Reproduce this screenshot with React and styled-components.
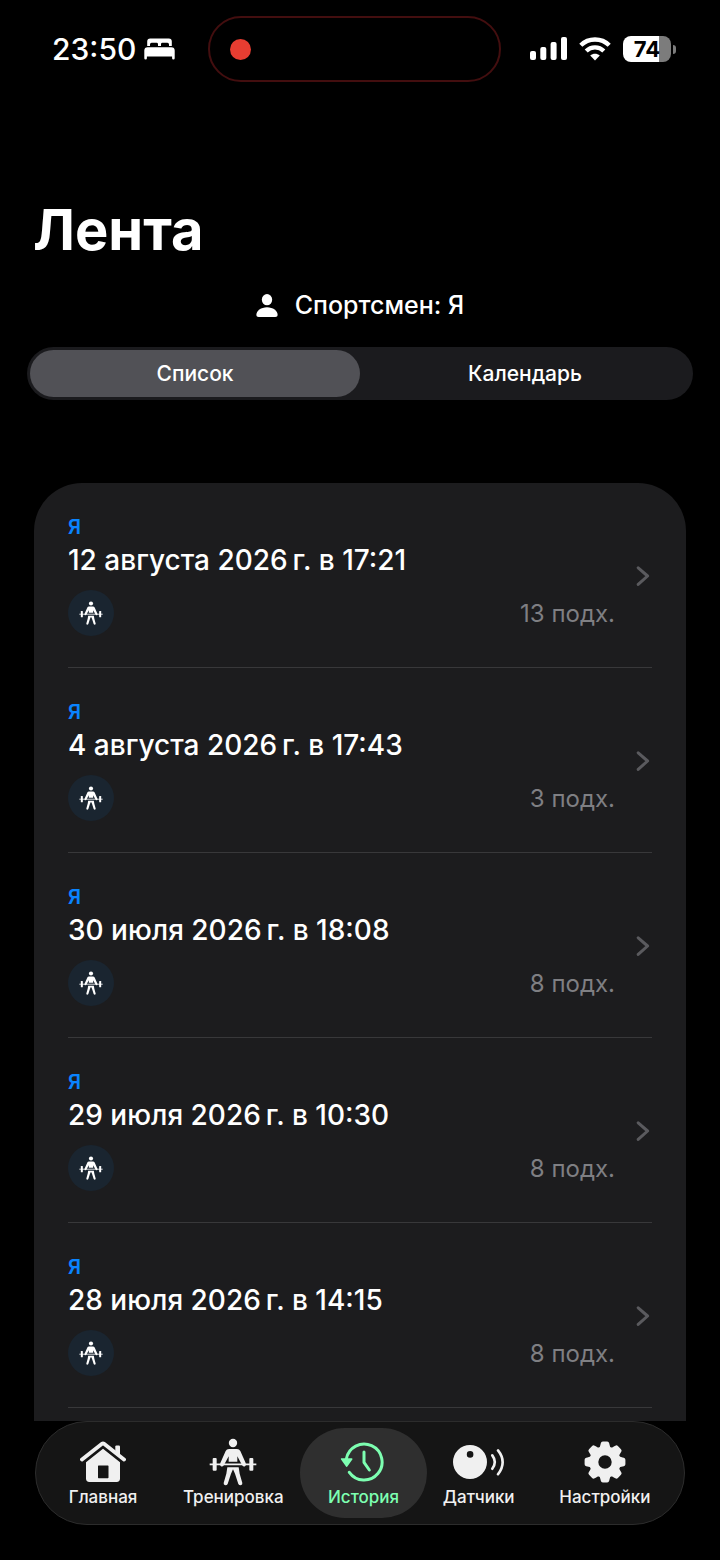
import React from 'react'
import styled, { createGlobalStyle, css } from 'styled-components'

const workouts = [
  { id: 1, athlete: 'Я', date: '12 августа 2026\u202fг. в 17:21', count: '13 подх.' },
  { id: 2, athlete: 'Я', date: '4 августа 2026\u202fг. в 17:43', count: '3 подх.' },
  { id: 3, athlete: 'Я', date: '30 июля 2026\u202fг. в 18:08', count: '8 подх.' },
  { id: 4, athlete: 'Я', date: '29 июля 2026\u202fг. в 10:30', count: '8 подх.' },
  { id: 5, athlete: 'Я', date: '28 июля 2026\u202fг. в 14:15', count: '8 подх.' },
]

const tabs = [
  { label: 'Главная', grow: 63, icon: HomeIcon },
  { label: 'Тренировка', grow: 67, icon: LifterIcon },
  { label: 'История', grow: 63, icon: HistoryIcon, active: true },
  { label: 'Датчики', grow: 52, icon: SensorIcon },
  { label: 'Настройки', grow: 74, icon: GearIcon },
]

function BedIcon() {
  return (
    <svg width="31" height="22" viewBox="0 0 31 22" fill="currentColor" aria-hidden="true">
      <path d="M3.2 8V3.4Q3.2 0.5 6.2 0.5H24.8Q27.8 0.5 27.8 3.4V8H25V6.4Q25 4.8 23.4 4.8H18.4Q17 4.8 17 6.2V8H14V6.2Q14 4.8 12.6 4.8H7.6Q6 4.8 6 6.4V8Z" />
      <path d="M0.3 12.6Q0.3 9.2 3.7 9.2H27.3Q30.7 9.2 30.7 12.6V20.2Q30.7 21.4 29.4 21.4Q28.1 21.4 28.1 20.2V18.5H2.9V20.2Q2.9 21.4 1.6 21.4Q0.3 21.4 0.3 20.2Z" />
    </svg>
  )
}

function SignalIcon() {
  return (
    <svg width="37" height="24" viewBox="0 0 37 24" fill="currentColor" aria-hidden="true">
      <rect x="0" y="14" width="6" height="9" rx="2" />
      <rect x="10.3" y="10" width="6" height="13" rx="2" />
      <rect x="20.6" y="5" width="6" height="18" rx="2" />
      <rect x="31" y="0" width="6" height="23" rx="2" />
    </svg>
  )
}

function WifiIcon() {
  return (
    <svg width="32" height="24" viewBox="0 0 32 24" fill="none" stroke="currentColor" aria-hidden="true">
      <path d="M1.8 8.3C9.5 0.6 22.5 0.6 30.2 8.3" strokeWidth="4.4" />
      <path d="M7.2 14C12 9.1 20 9.1 24.8 14" strokeWidth="4.2" />
      <path d="M16 23.4L11.2 18.6C14 16 18 16 20.8 18.6Z" fill="currentColor" stroke="none" />
    </svg>
  )
}

function PersonIcon() {
  return (
    <svg width="22" height="23" viewBox="0 0 66 69" fill="currentColor" aria-hidden="true">
      <ellipse cx="33" cy="17" rx="15.5" ry="17" />
      <path d="M1 63C1 51 15 40 33 40S65 51 65 63Q65 69 58 69H8Q1 69 1 63Z" />
    </svg>
  )
}

function ChevronIcon() {
  return (
    <svg width="14" height="20" viewBox="0 0 14 20" fill="none" stroke="currentColor" strokeWidth="3" strokeLinecap="round" strokeLinejoin="round" aria-hidden="true">
      <path d="M2.2 1.8L11.6 10L2.2 18.4" />
    </svg>
  )
}

function HomeIcon() {
  return (
    <svg width="46" height="42" viewBox="0 0 46 42" fill="currentColor" aria-hidden="true">
      <path d="M2 18.6L22 2.8Q23 2 24 2.8L44 18.6" fill="none" stroke="currentColor" strokeWidth="3.8" strokeLinecap="round" strokeLinejoin="round" />
      <path d="M35.3 12V5.6Q35.3 4.4 36.5 4.4H38.8Q40 4.4 40 5.6V15Z" />
      <path fillRule="evenodd" d="M23 7.8L40 21.3V37.6Q40 41 36.6 41H9.4Q6 41 6 37.6V21.3ZM18.6 24.4Q18 24.4 18 25V36.6Q18 37.2 18.6 37.2H27.9Q28.5 37.2 28.5 36.6V25Q28.5 24.4 27.9 24.4Z" />
    </svg>
  )
}

function LifterIcon({ size = 48 }) {
  return (
    <svg width={size} height={size} viewBox="26 21 144 144" fill="currentColor" aria-hidden="true">
      <circle cx="98" cy="36" r="12.5" />
      <path d="M86 54H110Q117 54 120 60L136 96Q139 103 134 106Q129 108 125 102L111 76V92H85V76L71 102Q67 108 62 106Q57 103 60 96L76 60Q79 54 86 54Z" />
      <path d="M28 97.5H168V102.5H28Z" />
      <rect x="37" y="81" width="12" height="38" rx="3" />
      <rect x="147" y="81" width="12" height="38" rx="3" />
      <path d="M81 109H115L118 128L126 156Q127 162 121 163Q116 163 114 159L104 128L98 115L92 128L82 159Q80 163 75 163Q69 162 70 156L78 128Z" />
    </svg>
  )
}

function HistoryIcon() {
  return (
    <svg width="48" height="42" viewBox="268 136 144 126" fill="none" stroke="currentColor" strokeWidth="9" strokeLinecap="round" strokeLinejoin="round" aria-hidden="true">
      <path d="M287 190A54 54 0 1 1 296 230" />
      <path d="M340 169V200L356 223" />
      <path d="M273 190H303L288 211Z" fill="currentColor" strokeWidth="5" />
    </svg>
  )
}

function SensorIcon() {
  return (
    <svg width="52" height="40" viewBox="0 0 52 40" aria-hidden="true">
      <path fill="currentColor" fillRule="evenodd" d="M0 20A17 17 0 1 1 34 20A17 17 0 1 1 0 20ZM13.8 12.4A3.3 3.3 0 1 0 20.4 12.4A3.3 3.3 0 1 0 13.8 12.4Z" />
      <path d="M39.3 13.4Q44.3 20 39.3 26.8M45 8.4Q54.3 20 45 32.2" fill="none" stroke="currentColor" strokeWidth="2.6" strokeLinecap="round" />
    </svg>
  )
}

function GearIcon() {
  const teeth = [0, 45, 90, 135, 180, 225, 270, 315]
  return (
    <svg width="42" height="42" viewBox="-21 -21 42 42" fill="currentColor" aria-hidden="true">
      <circle r="11.2" fill="none" stroke="currentColor" strokeWidth="9" />
      {teeth.map((angle) => (
        <path key={angle} transform={`rotate(${angle})`} d="M-6.2 -13.5Q-4.9 -15 -4.5 -17.6L-4.2 -18.8Q-3.8 -20.4 -2.2 -20.4H2.2Q3.8 -20.4 4.2 -18.8L4.5 -17.6Q4.9 -15 6.2 -13.5Z" />
      ))}
    </svg>
  )
}

function App() {
  return (
    <>
      <GlobalStyle />
      <Screen>
        <StatusBar>
          <Clock>
            23:50
            <BedIcon />
          </Clock>
          <Island>
            <RecordDot />
          </Island>
          <Indicators>
            <SignalIcon />
            <WifiIcon />
            <Battery>
              <BatteryLevel>74</BatteryLevel>
              <BatteryCap />
            </Battery>
          </Indicators>
        </StatusBar>

        <Title>Лента</Title>

        <AthleteButton type="button">
          <PersonIcon />
          Спортсмен: Я
        </AthleteButton>

        <Segments role="tablist">
          <Segment type="button" role="tab" aria-selected="true" $active>
            Список
          </Segment>
          <Segment type="button" role="tab" aria-selected="false">
            Календарь
          </Segment>
        </Segments>

        <Feed>
          <Card>
            {workouts.map((item) => (
              <li key={item.id}>
                <Row href={`#workout-${item.id}`}>
                  <RowBody>
                    <Athlete>{item.athlete}</Athlete>
                    <RowDate>{item.date}</RowDate>
                    <Meta>
                      <Badge>
                        <LifterIcon size={24} />
                      </Badge>
                      <Count>{item.count}</Count>
                    </Meta>
                  </RowBody>
                  <ChevronIcon />
                </Row>
              </li>
            ))}
          </Card>
        </Feed>

        <TabBar>
          {tabs.map(({ label, grow, icon: Icon, active }) => (
            <Tab key={label} href={`#${label}`} $grow={grow} $active={active} aria-current={active ? 'page' : undefined}>
              <TabIcon>
                <Icon />
              </TabIcon>
              {label}
            </Tab>
          ))}
        </TabBar>
      </Screen>
    </>
  )
}

const GlobalStyle = createGlobalStyle`
  * {
    box-sizing: border-box;
  }

  body {
    margin: 0;
    background: #000;
    color: #fff;
    font-family: Inter, 'Liberation Sans', sans-serif;
  }

  button {
    font-family: inherit;
    color: inherit;
    border: 0;
    background: none;
    padding: 0;
    cursor: pointer;
  }

  a {
    color: inherit;
    text-decoration: none;
  }

  svg {
    flex-shrink: 0;
    display: block;
  }
`

const Screen = styled.div`
  height: 100vh;
  display: flex;
  flex-direction: column;
`

const StatusBar = styled.header`
  display: grid;
  grid-template-columns: 1fr minmax(0, 293px) 1fr;
  align-items: center;
  padding: 16px 44px 0 32px;
`

const Clock = styled.div`
  display: flex;
  align-items: center;
  gap: 8px;
  padding-left: 20px;
  font-size: 30px;
  font-weight: 500;
`

const Island = styled.div`
  height: 66px;
  display: flex;
  align-items: center;
  padding-left: 20px;
  border: 2px solid #430e0f;
  border-radius: 33px;
`

const RecordDot = styled.span`
  width: 21px;
  height: 21px;
  border-radius: 50%;
  background: #e73d31;
`

const Indicators = styled.div`
  display: flex;
  align-items: center;
  justify-content: flex-end;
  gap: 12px;
`

const Battery = styled.div`
  display: flex;
  align-items: center;
  gap: 2px;
`

const BatteryLevel = styled.span`
  width: 48px;
  height: 26px;
  border-radius: 8px;
  background: linear-gradient(to right, #fff 74%, #7c7c7c 74%);
  color: #000;
  font-size: 22px;
  font-weight: 700;
  line-height: 26px;
  text-align: center;
`

const BatteryCap = styled.span`
  width: 3px;
  height: 9px;
  border-radius: 0 3px 3px 0;
  background: #7c7c7c;
`

const Title = styled.h1`
  margin: 112px 33px 0;
  font-size: 56px;
  font-weight: 700;
  line-height: 72px;
`

const AthleteButton = styled.button`
  align-self: center;
  display: flex;
  align-items: center;
  gap: 17px;
  margin-top: 23px;
  font-size: 25px;
  font-weight: 500;
  line-height: 32px;
`

const Segments = styled.div`
  display: flex;
  margin: 26px 27px 0;
  padding: 3px;
  border-radius: 27px;
  background: #1b1b1e;
`

const Segment = styled.button`
  flex: 1;
  height: 47px;
  border-radius: 24px;
  font-size: 21px;
  font-weight: 500;

  ${({ $active }) =>
    $active &&
    css`
      background: #515156;
    `}
`

const Feed = styled.main`
  flex: 1;
  min-height: 0;
  display: flex;
  flex-direction: column;
  margin-top: 83px;
  padding: 0 34px;
  overflow-y: auto;
  scrollbar-width: none;
`

const Card = styled.ul`
  flex: 1 0 auto;
  margin: 0;
  padding: 0 34px;
  list-style: none;
  border-radius: 48px 48px 0 0;
  background: #1c1c1e;
`

const Row = styled.a`
  display: flex;
  align-items: center;
  gap: 21px;
  padding: 33px 2px 31px 0;
  border-bottom: 1px solid #38383a;
  color: #5a5a5e;
`

const RowBody = styled.div`
  flex: 1;
  min-width: 0;
`

const Athlete = styled.div`
  font-size: 20px;
  font-weight: 600;
  line-height: 22px;
  color: #0a84ff;
`

const RowDate = styled.div`
  margin-top: 4px;
  font-size: 28px;
  font-weight: 500;
  line-height: 36px;
  color: #fff;
`

const Meta = styled.div`
  display: flex;
  align-items: center;
  justify-content: space-between;
  margin-top: 12px;
`

const Badge = styled.span`
  width: 46px;
  height: 46px;
  display: grid;
  place-items: center;
  border-radius: 50%;
  background: #1a2530;
  color: #fff;
`

const Count = styled.span`
  font-size: 24px;
  color: #7f7f83;
`

const TabBar = styled.nav`
  display: flex;
  margin: 0 35px 35px;
  padding: 6px 5px 6px 4px;
  border: 1px solid #2c2c2c;
  border-radius: 52px;
  background: #151515;
`

const Tab = styled.a`
  flex: ${({ $grow }) => $grow} 1 0;
  min-width: 0;
  height: 90px;
  display: flex;
  flex-direction: column;
  align-items: center;
  padding-top: 9px;
  border-radius: 45px;
  font-size: 17px;
  font-weight: 500;
  line-height: 22px;
  white-space: nowrap;
  color: #f0f0f0;

  ${({ $active }) =>
    $active &&
    css`
      background: #2f2f2f;
      color: #7dffb1;
    `}
`

const TabIcon = styled.span`
  height: 49px;
  display: flex;
  align-items: center;
`

export default App
